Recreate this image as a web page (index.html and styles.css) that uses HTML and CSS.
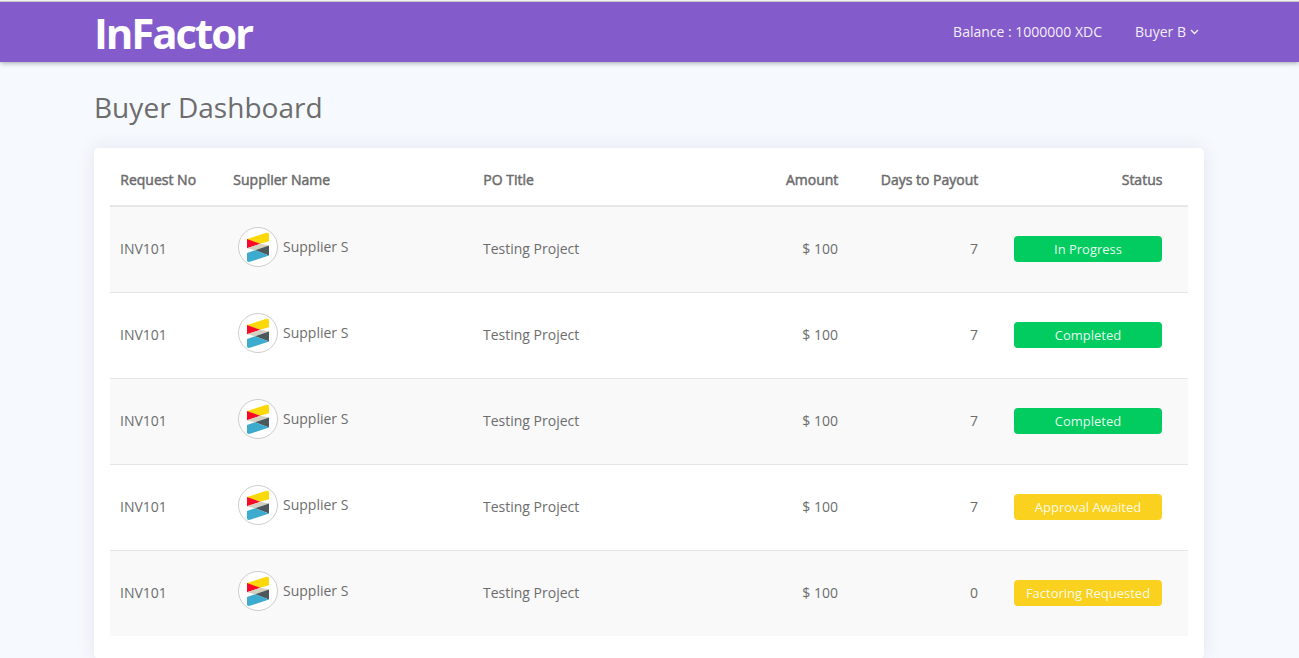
FILE: index.html
```
<!DOCTYPE html>
<html lang="en">
<head>
<meta charset="utf-8">
<title>InFactor</title>
<link rel="stylesheet" href="styles.css">
</head>
<body>
<svg class="defs" width="0" height="0" aria-hidden="true">
  <symbol id="supplier" viewBox="0 0 40 40">
    <circle cx="20" cy="20" r="19.5" fill="#fff" stroke="#ccc"/>
    <path fill="#fbd908" d="M9 12 28.5 5.8Q31 5.2 31 7.4V14.2L22 16.8 9 12.2z"/>
    <path fill="#fb0a28" d="M9 12 22.3 16.8 9 21.2z"/>
    <path fill="#d3d0c2" d="M9 21.2 22.3 16.8 31 18.6 17 23.2z"/>
    <path fill="#4d585d" d="M31 18.4V28.4L17 23.2z"/>
    <path fill="#3cabce" d="M9 26 17 23.2 31 28.4 12 34.8Q9 35.5 9 33.2z"/>
  </symbol>
</svg>
<header class="navbar">
  <div class="container nav-row">
    <a class="brand">InFactor</a>
    <nav class="nav-links">
      <span>Balance : 1000000 XDC</span>
      <span class="user">Buyer B<svg class="chevron" viewBox="0 0 9 6"><path d="M1 1 4.5 4.5 8 1"/></svg></span>
    </nav>
  </div>
</header>
<main class="container">
  <h1 class="title">Buyer Dashboard</h1>
  <section class="card">
    <table class="requests">
      <colgroup><col class="c-no"><col class="c-name"><col class="c-po"><col class="c-amount"><col class="c-days"><col class="c-status"></colgroup>
      <thead>
        <tr><th>Request No</th><th>Supplier Name</th><th>PO Title</th><th class="num">Amount</th><th class="num">Days to Payout</th><th class="status">Status</th></tr>
      </thead>
      <tbody>
        <tr><td>INV101</td><td><div class="supplier"><svg class="avatar"><use href="#supplier"/></svg><span>Supplier S</span></div></td><td>Testing Project</td><td class="num">$ 100</td><td class="num">7</td><td class="status"><span class="badge green">In Progress</span></td></tr>
        <tr><td>INV101</td><td><div class="supplier"><svg class="avatar"><use href="#supplier"/></svg><span>Supplier S</span></div></td><td>Testing Project</td><td class="num">$ 100</td><td class="num">7</td><td class="status"><span class="badge green">Completed</span></td></tr>
        <tr><td>INV101</td><td><div class="supplier"><svg class="avatar"><use href="#supplier"/></svg><span>Supplier S</span></div></td><td>Testing Project</td><td class="num">$ 100</td><td class="num">7</td><td class="status"><span class="badge green">Completed</span></td></tr>
        <tr><td>INV101</td><td><div class="supplier"><svg class="avatar"><use href="#supplier"/></svg><span>Supplier S</span></div></td><td>Testing Project</td><td class="num">$ 100</td><td class="num">7</td><td class="status"><span class="badge yellow">Approval Awaited</span></td></tr>
        <tr><td>INV101</td><td><div class="supplier"><svg class="avatar"><use href="#supplier"/></svg><span>Supplier S</span></div></td><td>Testing Project</td><td class="num">$ 100</td><td class="num">0</td><td class="status"><span class="badge yellow">Factoring Requested</span></td></tr>
      </tbody>
    </table>
  </section>
</main>
</body>
</html>
```
FILE: styles.css
```
* { box-sizing: border-box; }
html { overflow: hidden; }
body {
  margin: 0;
  height: 658px;
  overflow: hidden;
  background: #f6f9fe;
  color: #6d6d6d;
  font: 14px/20px "Open Sans", sans-serif;
}
.defs { display: block; }
.container { width: 1110px; margin: 0 0 0 94px; }
.navbar {
  height: 62px;
  padding-top: 2px;
  background: linear-gradient(#f2f1f0 1px, #c9c7cc 1px, #c9c7cc 2px, #845bcb 2px);
  box-shadow: 0 1px 5px rgba(0, 0, 0, .35);
  color: #f3eefa;
}
.nav-row { display: flex; justify-content: space-between; height: 60px; }
.brand {
  padding-top: 1px;
  color: #fff;
  font-size: 42px;
  font-weight: 700;
  line-height: 60px;
  letter-spacing: -2.1px;
}
.nav-links { display: flex; gap: 33px; padding: 20px 5px 0 0; }
.user { display: flex; align-items: center; height: 20px; gap: 4px; }
.chevron { width: 9px; height: 6px; fill: none; stroke: currentColor; stroke-width: 1.3; }
.title {
  margin: 0;
  padding: 25px 0 21px;
  font-size: 28px;
  font-weight: 400;
  line-height: 40px;
  letter-spacing: .03px;
}
.card {
  height: 511px;
  padding: 6px 16px 0;
  border-radius: 5px;
  background: #fff;
  box-shadow: 0 0 18px rgba(80, 90, 105, .12);
}
.requests { width: 1078px; table-layout: fixed; border-collapse: separate; border-spacing: 0; }
.c-no { width: 113px; }
.c-name { width: 250px; }
.c-po { width: 245px; }
.c-amount { width: 130px; }
.c-days { width: 140px; }
.c-status { width: 200px; }
th {
  height: 53px;
  padding: 0 9.7px 0 10.3px;
  border-bottom: 2px solid #e6e6e6;
  font-weight: 400;
  text-align: left;
  -webkit-text-stroke: .5px currentColor;
}
td { height: 86px; padding: 0 10px 2px; border-bottom: 1px solid #e6e6e6; }
tbody tr:nth-child(odd) { background: #f9f9f9; }
tbody tr:last-child td { height: 85px; border-bottom: 0; }
.num { text-align: right; }
td.status { padding-right: 26px; }
th.status { padding-right: 25.6px; }
.status { text-align: right; }
.supplier { display: flex; gap: 5px; padding: 0 0 3px 5px; line-height: 40px; }
.avatar { width: 40px; height: 40px; }
.badge {
  display: block;
  width: 148px;
  margin-left: auto;
  border-radius: 4px;
  color: rgba(255, 255, 255, .92);
  font-size: 13px;
  line-height: 26px;
  text-align: center;
}
.green { background: #02cc5f; }
.yellow { background: #fad11e; }
```
